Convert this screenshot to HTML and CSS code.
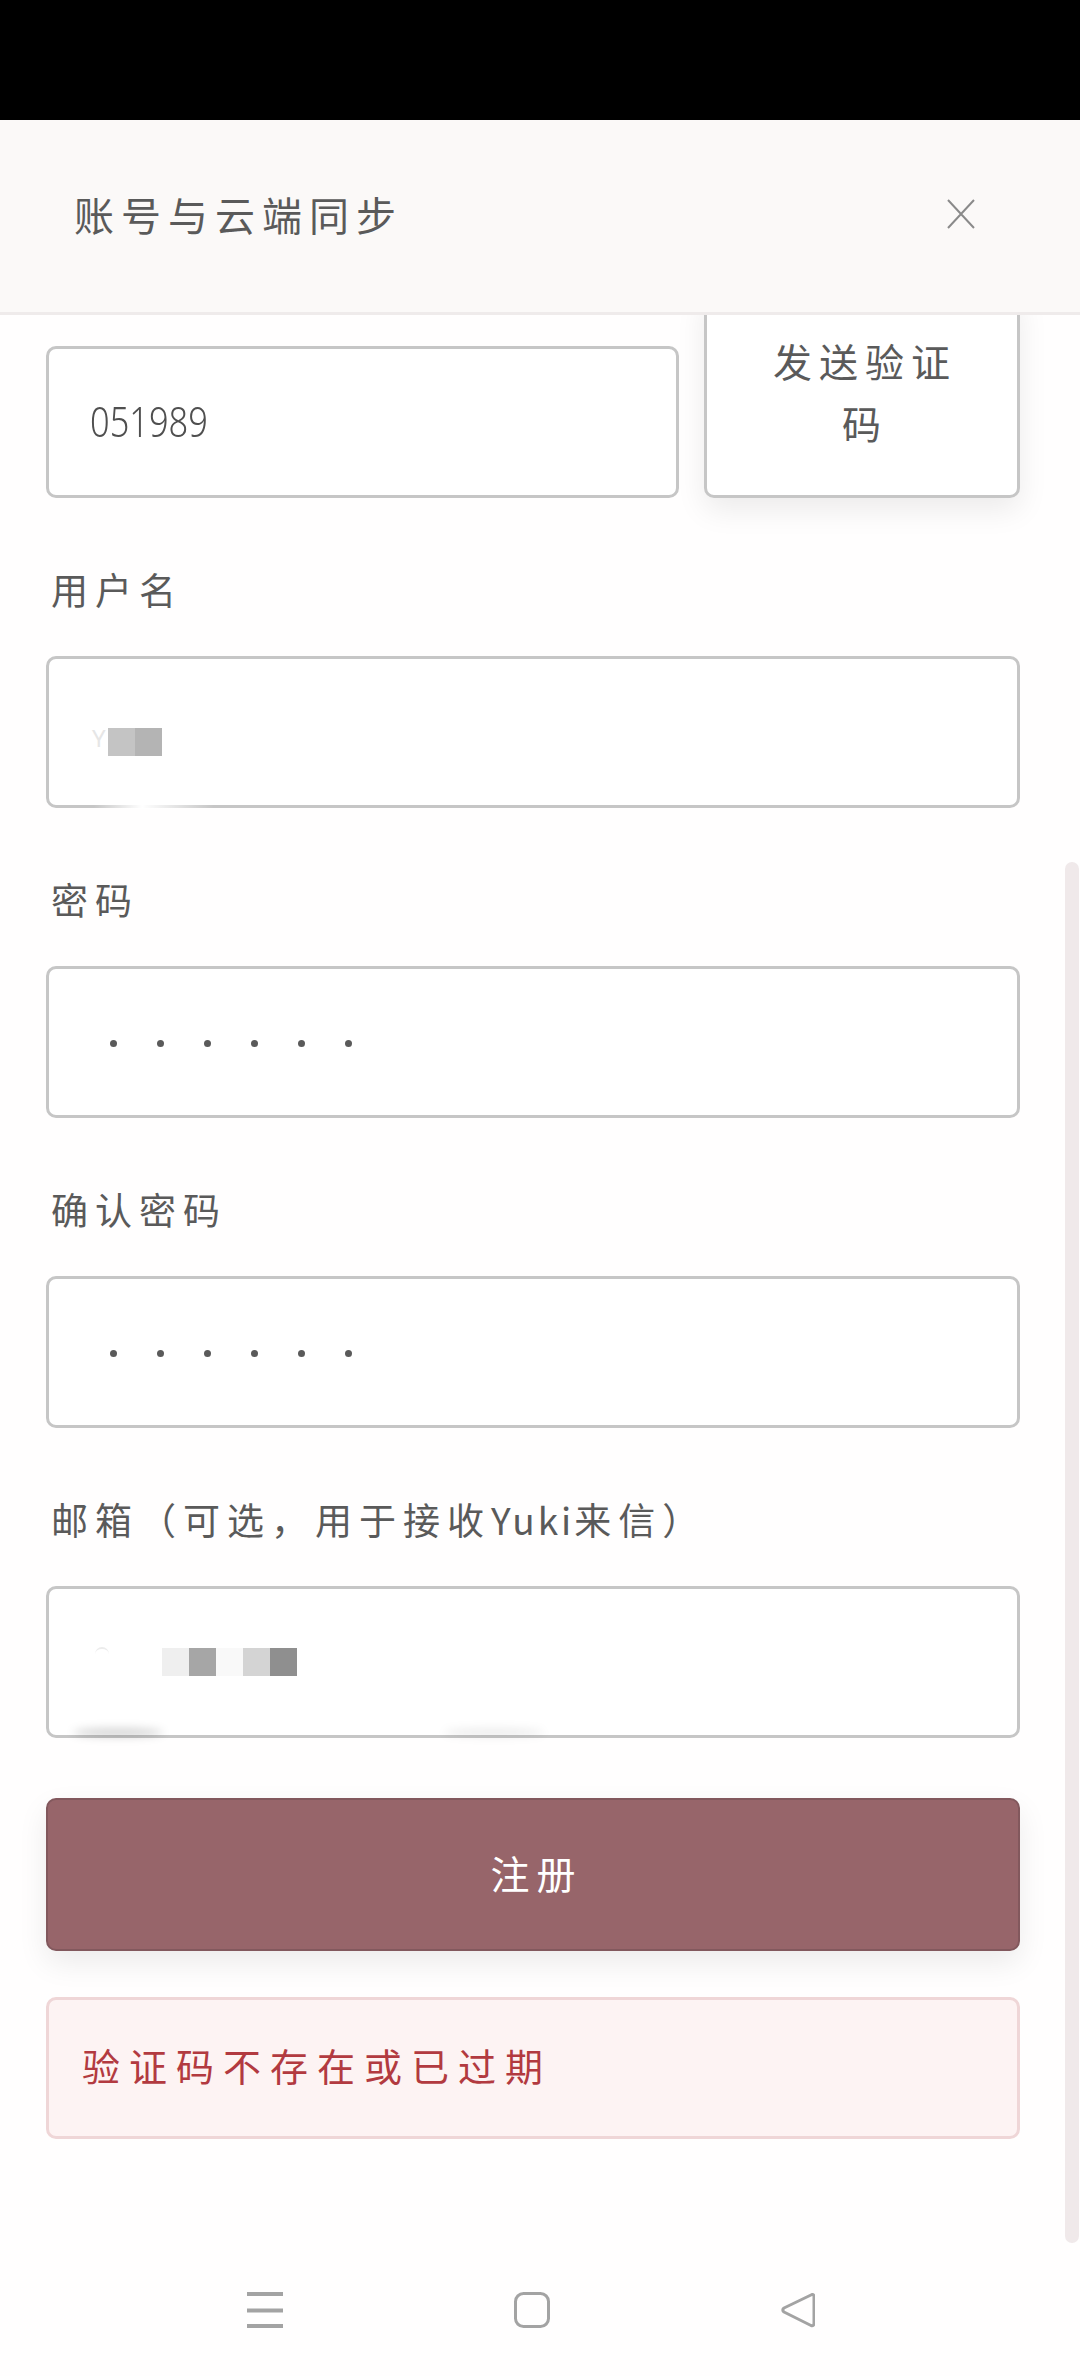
FILE: index.html
```html
<!DOCTYPE html>
<html lang="zh-CN">

<head>
    <meta charset="UTF-8">
    <meta name="viewport" content="width=device-width, initial-scale=1.0">
    <title>账号与云端同步</title>
    <link rel="stylesheet" href="styles.css">
</head>

<body>
    <div class="status-bar"></div>
    <header class="top">
        <h1 class="top-title">账号与云端同步</h1>
        <svg class="close" width="28" height="30" viewBox="0 0 28 30">
            <path d="M1 1L27 29M27 1L1 29" fill="none" stroke="#8a8a8a" stroke-width="2"></path>
        </svg>
    </header>
    <main class="scroller">
        <div class="code-row">
            <div class="box code-box"><span class="code-text">051989</span></div>
            <button class="send-btn">发送验证码</button>
        </div>

        <div class="label">用户名</div>
        <div class="box name-box">
            <span class="ghost-y">Y</span>
            <i class="pix pix-c4"></i><i class="pix pix-b4"></i>
            <i class="fade-line"></i>
        </div>

        <div class="label">密码</div>
        <div class="box dots">
            <i></i><i></i><i></i><i></i><i></i><i></i>
        </div>

        <div class="label">确认密码</div>
        <div class="box dots">
            <i></i><i></i><i></i><i></i><i></i><i></i>
        </div>

        <div class="label">邮箱（可选，用于接收<span class="latin">Yuki</span>来信）</div>
        <div class="box mail-box">
            <i class="ghost-arc"></i>
            <i class="pix pix-ef"></i><i class="pix pix-a6"></i><i class="pix pix-f9"></i><i class="pix pix-d4"></i><i class="pix pix-8f"></i>
            <i class="smudge smudge-a"></i>
            <i class="smudge smudge-b"></i>
        </div>

        <button class="submit">注册</button>
        <div class="error">验证码不存在或已过期</div>

        <div class="scroll-thumb"></div>
    </main>
    <nav class="sys-nav">
        <svg width="36" height="36" viewBox="0 0 36 36">
            <path d="M0 2H36M0 18.500H36M0 34H36" fill="none" stroke="#a3a3a3" stroke-width="4"></path>
        </svg>
        <svg width="36" height="36" viewBox="0 0 36 36">
            <rect x="1.500" y="1.500" width="33" height="33" rx="8" fill="none" stroke="#a3a3a3" stroke-width="3"></rect>
        </svg>
        <svg width="34" height="36" viewBox="0 0 34 36">
            <path d="M31 2.500Q33 2 33 5V31Q33 34.500 30 33.500L3 20Q0.500 18 3 16Z" fill="none" stroke="#a3a3a3" stroke-width="3" stroke-linejoin="round"></path>
        </svg>
    </nav>
</body>

</html>
```

FILE: styles.css
```css
* {
    margin: 0;
    padding: 0;
    box-sizing: border-box;
}

html,
body {
    width: 1080px;
    height: 2376px;
    overflow: hidden;
}

body {
    display: flex;
    flex-direction: column;
    background-color: #fffefe;
    color: #5a5a5a;
    font-family: "Noto Sans CJK SC", "Noto Sans", sans-serif;
}

.status-bar {
    height: 120px;
    background-color: #000;
}

.top {
    height: 195px;
    display: flex;
    align-items: center;
    justify-content: space-between;
    padding: 0 105px 4px 74px;
    background-color: #fbf9f8;
    border-bottom: 3px solid #efebeb;
}

.top-title {
    font-size: 40px;
    font-weight: 400;
    letter-spacing: 7px;
    line-height: 50px;
}

.scroller {
    position: relative;
    flex: 1;
    overflow: hidden;
    padding: 0 60px 0 46px;
}

.code-row {
    display: grid;
    grid-template-columns: 633px 316px;
    column-gap: 25px;
    align-items: end;
    margin-top: -25px;
}

.box {
    height: 152px;
    position: relative;
    display: flex;
    align-items: center;
    padding-left: 43px;
    background-color: #fff;
    border: 3px solid #c6c6c6;
    border-radius: 10px;
}

.code-box {
    padding-left: 41px;
}

.code-text {
    display: inline-block;
    margin-top: -4px;
    color: #4f4f4f;
    font-family: "Noto Sans", sans-serif;
    font-size: 43px;
    font-weight: 300;
    transform: scaleX(0.8);
    transform-origin: left center;
}

.send-btn {
    height: 208px;
    padding: 0 42px 6px 48px;
    background-color: #fff;
    border: 3px solid #c6c6c6;
    border-radius: 10px;
    box-shadow: 0 12px 30px rgba(0, 0, 0, 0.08);
    color: #5a5a5a;
    font: 400 39px/62px "Noto Sans CJK SC", sans-serif;
    letter-spacing: 7px;
}

.label {
    height: 50px;
    margin-top: 66px;
    margin-bottom: 42px;
    padding-left: 5px;
    font-size: 37px;
    letter-spacing: 7px;
    line-height: 50px;
    white-space: nowrap;
}

.latin {
    letter-spacing: 3px;
}

.ghost-y {
    position: absolute;
    left: 43px;
    top: 67px;
    font-family: "Noto Sans", sans-serif;
    font-size: 24px;
    line-height: 24px;
    color: #e6e6e6;
}

.ghost-arc {
    position: absolute;
    left: 46px;
    top: 58px;
    width: 14px;
    height: 14px;
    border-top: 2px solid #ececec;
    border-radius: 50%;
}

.pix {
    display: block;
    width: 27px;
    height: 28px;
}

.name-box .pix {
    margin-top: 20px;
}

.name-box .pix-c4 {
    margin-left: 16px;
    background-color: #c4c4c4;
}

.pix-b4 {
    background-color: #b4b4b4;
}

.mail-box .pix-ef {
    margin-left: 70px;
    background-color: #efefef;
}

.pix-a6 {
    background-color: #a6a6a6;
}

.pix-f9 {
    background-color: #f9f9f9;
}

.pix-d4 {
    background-color: #d4d4d4;
}

.pix-8f {
    background-color: #8f8f8f;
}

.fade-line {
    position: absolute;
    left: 45px;
    bottom: -4px;
    width: 120px;
    height: 5px;
    background: linear-gradient(90deg, rgba(255, 255, 255, 0), #fff 40%, rgba(255, 255, 255, 0));
}

.smudge {
    position: absolute;
    bottom: -2px;
    height: 9px;
    border-radius: 50%;
    background-color: rgba(0, 0, 0, 0.16);
    filter: blur(4px);
}

.smudge-a {
    left: 24px;
    width: 90px;
}

.smudge-b {
    left: 395px;
    width: 100px;
    background-color: rgba(0, 0, 0, 0.07);
}

.dots {
    column-gap: 40px;
    padding-top: 2px;
    padding-left: 61px;
}

.dots i {
    display: block;
    width: 7px;
    height: 7px;
    border-radius: 50%;
    background-color: #5a5a5a;
}

.submit {
    display: block;
    width: 100%;
    height: 153px;
    margin-top: 60px;
    padding: 0 0 5px 7px;
    background-color: #97656a;
    border: 2px solid #82585d;
    border-radius: 10px;
    box-shadow: 0 12px 30px rgba(0, 0, 0, 0.08);
    color: #fff;
    font: 400 39px/50px "Noto Sans CJK SC", sans-serif;
    letter-spacing: 7px;
}

.error {
    height: 142px;
    display: flex;
    align-items: center;
    margin-top: 46px;
    padding: 0 0 8px 33px;
    background-color: #fdf3f3;
    border: 3px solid #efd6d7;
    border-radius: 10px;
    color: #b23a40;
    font-size: 38px;
    letter-spacing: 9px;
}

.scroll-thumb {
    position: absolute;
    top: 547px;
    right: 1px;
    width: 14px;
    height: 1381px;
    border-radius: 7px;
    background-color: #f0e9ea;
}

.sys-nav {
    height: 132px;
    display: flex;
    align-items: center;
    column-gap: 231px;
    padding-left: 247px;
    background-color: #fffefe;
}
```
